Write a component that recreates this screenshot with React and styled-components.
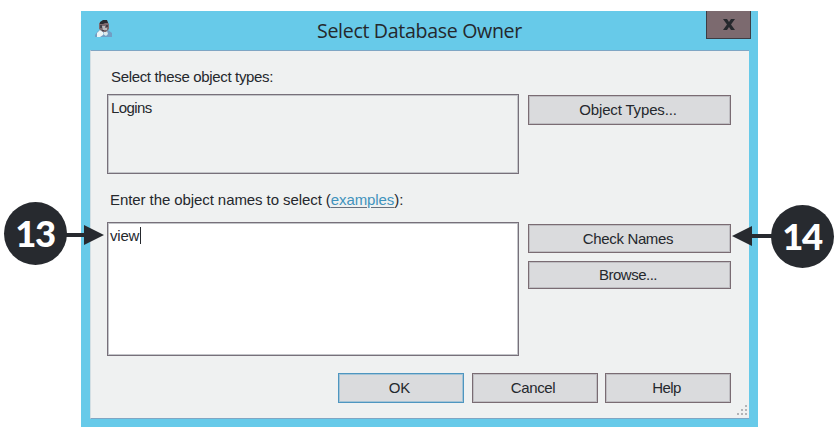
import React from "react";
import styled, { createGlobalStyle } from "styled-components";

const GlobalStyle = createGlobalStyle`
  * { box-sizing: border-box; }
  body {
    margin: 0;
    background: #ffffff;
    font-family: "Liberation Sans", Arial, sans-serif;
    color: #25282d;
  }
`;

const Stage = styled.main`
  position: relative;
  width: 839px;
  height: 438px;
  padding: 11px 0 0 81px;
  overflow: hidden;
`;

const Dialog = styled.section`
  width: 677px;
  height: 416px;
  padding: 0 9px 8px;
  display: flex;
  flex-direction: column;
  background: #67cae9;
`;

const TitleBar = styled.header`
  display: grid;
  grid-template-columns: 45px 1fr 45px;
  align-items: start;
  height: 39px;
  margin-right: -2px;
`;

const TitleIcon = styled.svg`
  width: 18px;
  height: 20px;
  margin: 8px 0 0 5px;
`;

const Title = styled.h1`
  margin: 0;
  padding-right: 2px;
  font: 400 19.6px/40px "Open Sans", sans-serif;
  letter-spacing: ${(p) => p.$spacing}px;
  text-align: center;
  white-space: nowrap;
`;

const CloseButton = styled.button`
  display: flex;
  align-items: center;
  justify-content: center;
  width: 45px;
  height: 28px;
  padding: 0 0 1px 1px;
  background: #7c6a6f;
  border: 1px solid #3c3c43;
  border-top: 0;
`;

const Panel = styled.div`
  position: relative;
  flex: 1;
  display: flex;
  flex-direction: column;
  padding: 16px 17px 0 16px;
  background: #eff1f1;
  border-top: 1px solid #7fa6c4;
  border-bottom: 1px solid #7fa6c4;
  border-left: 1px solid #d3dfe4;
`;

const Row = styled.div`
  display: grid;
  grid-template-columns: 412px 203px;
  column-gap: 9px;
  align-items: start;
`;

const Label = styled.div`
  height: ${(p) => p.$height}px;
  padding: ${(p) => p.$offset || 0}px 0 0 ${(p) => p.$indent}px;
  font-size: 15px;
  line-height: 20px;
  letter-spacing: ${(p) => p.$spacing}px;
  white-space: nowrap;
`;

const Link = styled.a`
  color: #3f93bd;
  text-decoration: underline;
  text-decoration-color: #66707d;
  text-underline-offset: 2px;
`;

const Field = styled.div`
  display: flex;
  align-items: flex-start;
  height: ${(p) => p.$height}px;
  padding: 3px 0 0 ${(p) => (p.$editable ? 2 : 3)}px;
  background: ${(p) => (p.$editable ? "#ffffff" : "#eff1f1")};
  border: 1px solid #77707a;
  box-shadow: inset 0 0 0 1px #c3c5c9;
  font-size: 15px;
  line-height: 20px;
  letter-spacing: ${(p) => p.$spacing}px;
`;

const Caret = styled.span`
  width: 1px;
  height: 17px;
  margin: 1px 0 0 1px;
  background: #25282d;
`;

const SideButtons = styled.div`
  display: flex;
  flex-direction: column;
  gap: 8px;
  padding-top: ${(p) => p.$offset}px;
`;

const Button = styled.button`
  height: ${(p) => p.$height || 30}px;
  padding: 0 3px 0 0;
  background: #dadbdd;
  border: 1px solid ${(p) => (p.$primary ? "#4e96c0" : "#7a6c73")};
  box-shadow: inset 0 0 0 1px ${(p) => (p.$primary ? "#a5c4d6" : "#bfbec2")};
  color: inherit;
  font: 400 15px/20px "Liberation Sans", Arial, sans-serif;
  letter-spacing: ${(p) => p.$spacing || 0}px;
`;

const Footer = styled.footer`
  display: grid;
  grid-template-columns: repeat(3, 126px);
  gap: 7.5px;
  justify-content: end;
  padding-right: 1px;
  margin-top: 17px;
`;

const ResizeGrip = styled.svg`
  position: absolute;
  right: 1px;
  bottom: 2px;
  width: 12px;
  height: 12px;
`;

const Callout = styled.div`
  position: absolute;
  left: ${(p) => p.$left}px;
  top: ${(p) => p.$top}px;
  display: flex;
  flex-direction: ${(p) => (p.$reverse ? "row-reverse" : "row")};
  align-items: flex-start;
`;

const CalloutNumber = styled.span`
  width: 63px;
  height: 63px;
  border-radius: 50%;
  background: #272a2f;
  color: #ffffff;
  font: 900 36.5px/62px Lato, sans-serif;
  letter-spacing: -1.5px;
  padding-right: 1px;
  text-align: center;
`;

const CalloutArrow = styled.svg`
  width: ${(p) => p.$width}px;
  height: 20px;
  margin: ${(p) => p.$top}px -1px 0;
  fill: #272a2f;
`;

const gripDots = [[9, 1], [5, 5], [9, 5], [1, 9], [5, 9], [9, 9]];

function UserIcon() {
  return (
    <TitleIcon viewBox="0 0 18 20" aria-hidden="true">
      <path d="M0 18V16L3 12L7 10L13 11L17 14V18Z" fill="#719ec4" />
      <path d="M2 17V14L5 11L8 13V16L5 18H2Z" fill="#edf5f6" />
      <path d="M9 13L12 12L13 15L11 17L8 15Z" fill="#dce9ec" />
      <path d="M4 4L8 2H12L14 5V10L11 13H8L4 10Z" fill="#7c6a6f" />
      <path d="M5 3L8 1H12L13 4L10 4L8 5H5Z" fill="#292b31" />
      <path d="M7 7H10V9H12V11H8Z" fill="#b7b9bd" />
      <path d="M5 6H7V9H5ZM11 6H13V8H11ZM7 11H9V12H7Z" fill="#44424a" />
    </TitleIcon>
  );
}

export default function App() {
  return (
    <>
      <GlobalStyle />
      <Stage>
        <Dialog>
          <TitleBar>
            <UserIcon />
            <Title $spacing={-0.33}>Select Database Owner</Title>
            <CloseButton aria-label="Close">
              <svg width="12" height="11" viewBox="0 0 12 11">
                <path d="M0 0H4L6 3L8 0H12L8 5.5L12 11H8L6 8L4 11H0L4 5.5Z" fill="#25282d" />
              </svg>
            </CloseButton>
          </TitleBar>
          <Panel>
            <Label $height={27} $indent={4} $spacing={-0.34}>Select these object types:</Label>
            <Row>
              <Field $height={80} $spacing={-0.6}>Logins</Field>
              <SideButtons $offset={1}>
                <Button $spacing={-0.15}>Object Types...</Button>
              </SideButtons>
            </Row>
            <Label $height={48} $offset={16} $indent={3} $spacing={-0.08}>
              Enter the object names to select (<Link>examples</Link>):
            </Label>
            <Row>
              <Field $height={134} $editable $spacing={-0.2}>
                view<Caret />
              </Field>
              <SideButtons $offset={2}>
                <Button $height={29} $spacing={-0.35}>Check Names</Button>
                <Button $height={28} $spacing={-0.5}>Browse...</Button>
              </SideButtons>
            </Row>
            <Footer>
              <Button $primary>OK</Button>
              <Button $spacing={-0.4}>Cancel</Button>
              <Button $spacing={-0.6}>Help</Button>
            </Footer>
            <ResizeGrip viewBox="0 0 12 12" aria-hidden="true">
              {gripDots.map(([x, y]) => (
                <rect key={`${x}-${y}`} x={x} y={y} width="2" height="2" fill="#b2b4b7" />
              ))}
            </ResizeGrip>
          </Panel>
        </Dialog>
        <Callout $left={4} $top={202}>
          <CalloutNumber>13</CalloutNumber>
          <CalloutArrow $width={39} $top={23} viewBox="0 0 39 20">
            <path d="M0 8H18V0L38 10L18 20V12H0Z" />
          </CalloutArrow>
        </Callout>
        <Callout $left={732} $top={205} $reverse>
          <CalloutNumber>14</CalloutNumber>
          <CalloutArrow $width={41} $top={21} viewBox="0 0 41 20">
            <path d="M41 8H21V0L1 10L21 20V12H41Z" />
          </CalloutArrow>
        </Callout>
      </Stage>
    </>
  );
}
